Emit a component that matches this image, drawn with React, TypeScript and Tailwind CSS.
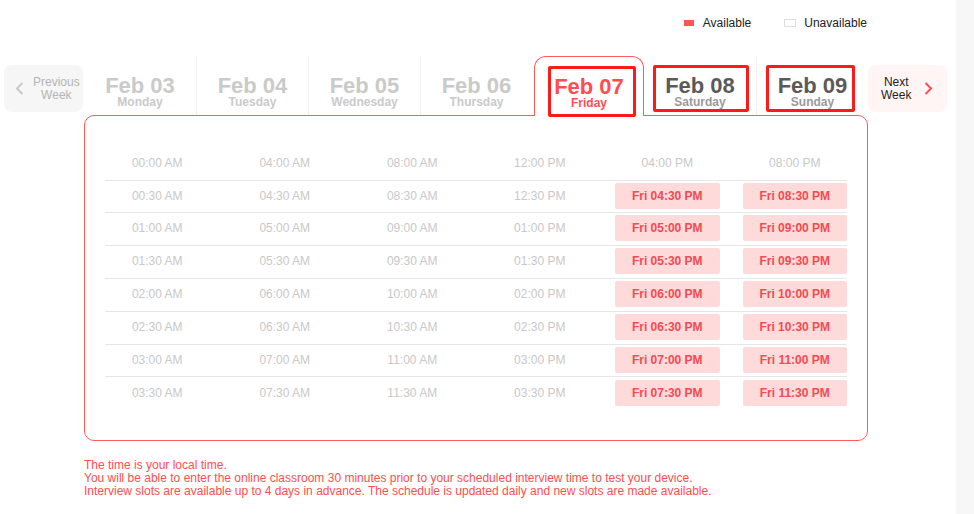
import React from "react";

type Day = { date: string; day: string; state: "past" | "active" | "future"; divider: boolean; mark?: string };

const days: Day[] = [
  { date: "Feb 03", day: "Monday", state: "past", divider: false },
  { date: "Feb 04", day: "Tuesday", state: "past", divider: true },
  { date: "Feb 05", day: "Wednesday", state: "past", divider: true },
  { date: "Feb 06", day: "Thursday", state: "past", divider: true },
  { date: "Feb 07", day: "Friday", state: "active", divider: false },
  { date: "Feb 08", day: "Saturday", state: "future", divider: false, mark: "left-[9px] top-[9px] w-[96px] h-[47px]" },
  { date: "Feb 09", day: "Sunday", state: "future", divider: true, mark: "left-[9px] top-[9px] w-[89px] h-[47px]" },
];

const cols = [
  ["00:00 AM", "00:30 AM", "01:00 AM", "01:30 AM", "02:00 AM", "02:30 AM", "03:00 AM", "03:30 AM"],
  ["04:00 AM", "04:30 AM", "05:00 AM", "05:30 AM", "06:00 AM", "06:30 AM", "07:00 AM", "07:30 AM"],
  ["08:00 AM", "08:30 AM", "09:00 AM", "09:30 AM", "10:00 AM", "10:30 AM", "11:00 AM", "11:30 AM"],
  ["12:00 PM", "12:30 PM", "01:00 PM", "01:30 PM", "02:00 PM", "02:30 PM", "03:00 PM", "03:30 PM"],
  ["04:00 PM", "04:30 PM", "05:00 PM", "05:30 PM", "06:00 PM", "06:30 PM", "07:00 PM", "07:30 PM"],
  ["08:00 PM", "08:30 PM", "09:00 PM", "09:30 PM", "10:00 PM", "10:30 PM", "11:00 PM", "11:30 PM"],
];

const rowClasses = [
  "pb-[4px]",
  "border-t border-[#e6e6e6] pt-[2px] pb-[3px]",
  "border-t border-[#e6e6e6] pt-[2px] pb-[4px]",
  "border-t border-[#e6e6e6] pt-[2px] pb-[4px]",
  "border-t border-[#e6e6e6] pt-[2px] pb-[4px]",
  "border-t border-[#e6e6e6] pt-[2px] pb-[4px]",
  "border-t border-[#e6e6e6] pt-[2px] pb-[3px]",
  "border-t border-[#e6e6e6] pt-[3px] pb-[4px]",
];

function ChevronLeft({ color }: { color: string }) {
  return (
    <svg width="9" height="13" viewBox="0 0 9 13" fill="none">
      <path d="M7.5 1L2 6.5L7.5 12" stroke={color} strokeWidth="2" />
    </svg>
  );
}
function ChevronRight({ color }: { color: string }) {
  return (
    <svg width="9" height="13" viewBox="0 0 9 13" fill="none">
      <path d="M1.5 1L7 6.5L1.5 12" stroke={color} strokeWidth="2" />
    </svg>
  );
}

function TabLabel({ d }: { d: Day }) {
  const dateColor = d.state === "past" ? "text-[#cacaca]" : d.state === "active" ? "text-[#ff4d50]" : "text-[#5a5a5a]";
  const dayColor = d.state === "past" ? "text-[#cacaca]" : d.state === "active" ? "text-[#ff4d50]" : "text-[#9a9a9a]";
  return (
    <div className="flex flex-col items-center pt-[19px]">
      <div className={`text-[22px] leading-[21px] font-bold ${dateColor}`}>{d.date}</div>
      <div className={`text-[12px] leading-[12px] font-bold ${dayColor}`}>{d.day}</div>
    </div>
  );
}

export default function App() {
  return (
    <div className="flex w-[974px] h-[514px] bg-white font-['Liberation_Sans',Arial,sans-serif] overflow-hidden">
      <div className="w-[956px] flex flex-col">
        {/* legend */}
        <div className="h-[56px] flex justify-end pr-[89px] pt-[16px]">
          <div className="flex items-center h-[14px] text-[12px] leading-[14px] text-[#222]">
            <span className="w-[10px] h-[6px] bg-[#ff5555]" />
            <span className="ml-[9px]">Available</span>
            <span className="ml-[33px] w-[12px] h-[8px] border border-[#dddddd]" />
            <span className="ml-[8px]">Unavailable</span>
          </div>
        </div>

        {/* week nav */}
        <div className="flex items-start pl-[4px] h-[59px]">
          <div className="mt-[9px] w-[79px] h-[47px] rounded-[8px] bg-[#f6f6f6] flex items-center pl-[11px]">
            <ChevronLeft color="#c8c8c8" />
            <div className="ml-[9px] text-[12px] leading-[13px] text-[#b4b4b4] text-center">
              Previous
              <br />
              Week
            </div>
          </div>
          <div className="ml-[1px] w-[784px] flex h-[59px]">
            {days.map((d) =>
              d.state === "active" ? (
                <div key={d.date} className="w-[112px] relative z-10">
                  <div className="ml-[2px] w-[110px] h-[60px] border border-b-0 border-[#ff5a5a] rounded-t-[12px] bg-white relative">
                    <TabLabel d={d} />
                    <div className="absolute left-[13px] top-[9px] w-[88px] h-[51px] border-[3px] border-[#ff1a1a] rounded-[2px]" />
                  </div>
                </div>
              ) : (
                <div
                  key={d.date}
                  className={`w-[112px] h-[59px] relative ${d.divider ? "border-l border-[#efefef]" : ""}`}
                >
                  <TabLabel d={d} />
                  {d.mark && (
                    <div className={`absolute ${d.mark} border-[3px] border-[#ff1a1a] rounded-[2px]`} />
                  )}
                </div>
              )
            )}
          </div>
          <div className="mt-[9px] w-[79px] h-[47px] rounded-[8px] bg-[#fff5f5] flex items-center pl-[13px]">
            <div className="text-[12px] leading-[13px] text-[#222] text-center">
              Next
              <br />
              Week
            </div>
            <div className="ml-[13px]">
              <ChevronRight color="#ff4d50" />
            </div>
          </div>
        </div>

        {/* panel */}
        <div className="ml-[84px] w-[784px] h-[326px] border border-[#ff5a5a] rounded-[10px] px-[20px] pt-[34px]">
          {rowClasses.map((rc, r) => (
            <div key={r} className={`grid grid-cols-6 gap-x-[23px] ${rc}`}>
              {cols.map((c, ci) => {
                const avail = r > 0 && ci >= 4;
                return avail ? (
                  <div
                    key={ci}
                    className="h-[26px] rounded-[2px] bg-[#ffdadb] text-[#f44a50] text-[12px] font-bold flex items-center justify-center"
                  >
                    Fri {c[r]}
                  </div>
                ) : (
                  <div key={ci} className="h-[26px] text-[#c8c8c8] text-[12px] flex items-center justify-center">
                    {c[r]}
                  </div>
                );
              })}
            </div>
          ))}
        </div>

        {/* footer */}
        <div className="ml-[84px] mt-[18px] text-[12px] leading-[13px] text-[#ff4d50]">
          <div>The time is your local time.</div>
          <div>You will be able to enter the online classroom 30 minutes prior to your scheduled interview time to test your device.</div>
          <div>Interview slots are available up to 4 days in advance. The schedule is updated daily and new slots are made available.</div>
        </div>
      </div>
      <div className="w-[18px] bg-[#f7f7f7]" />
    </div>
  );
}
